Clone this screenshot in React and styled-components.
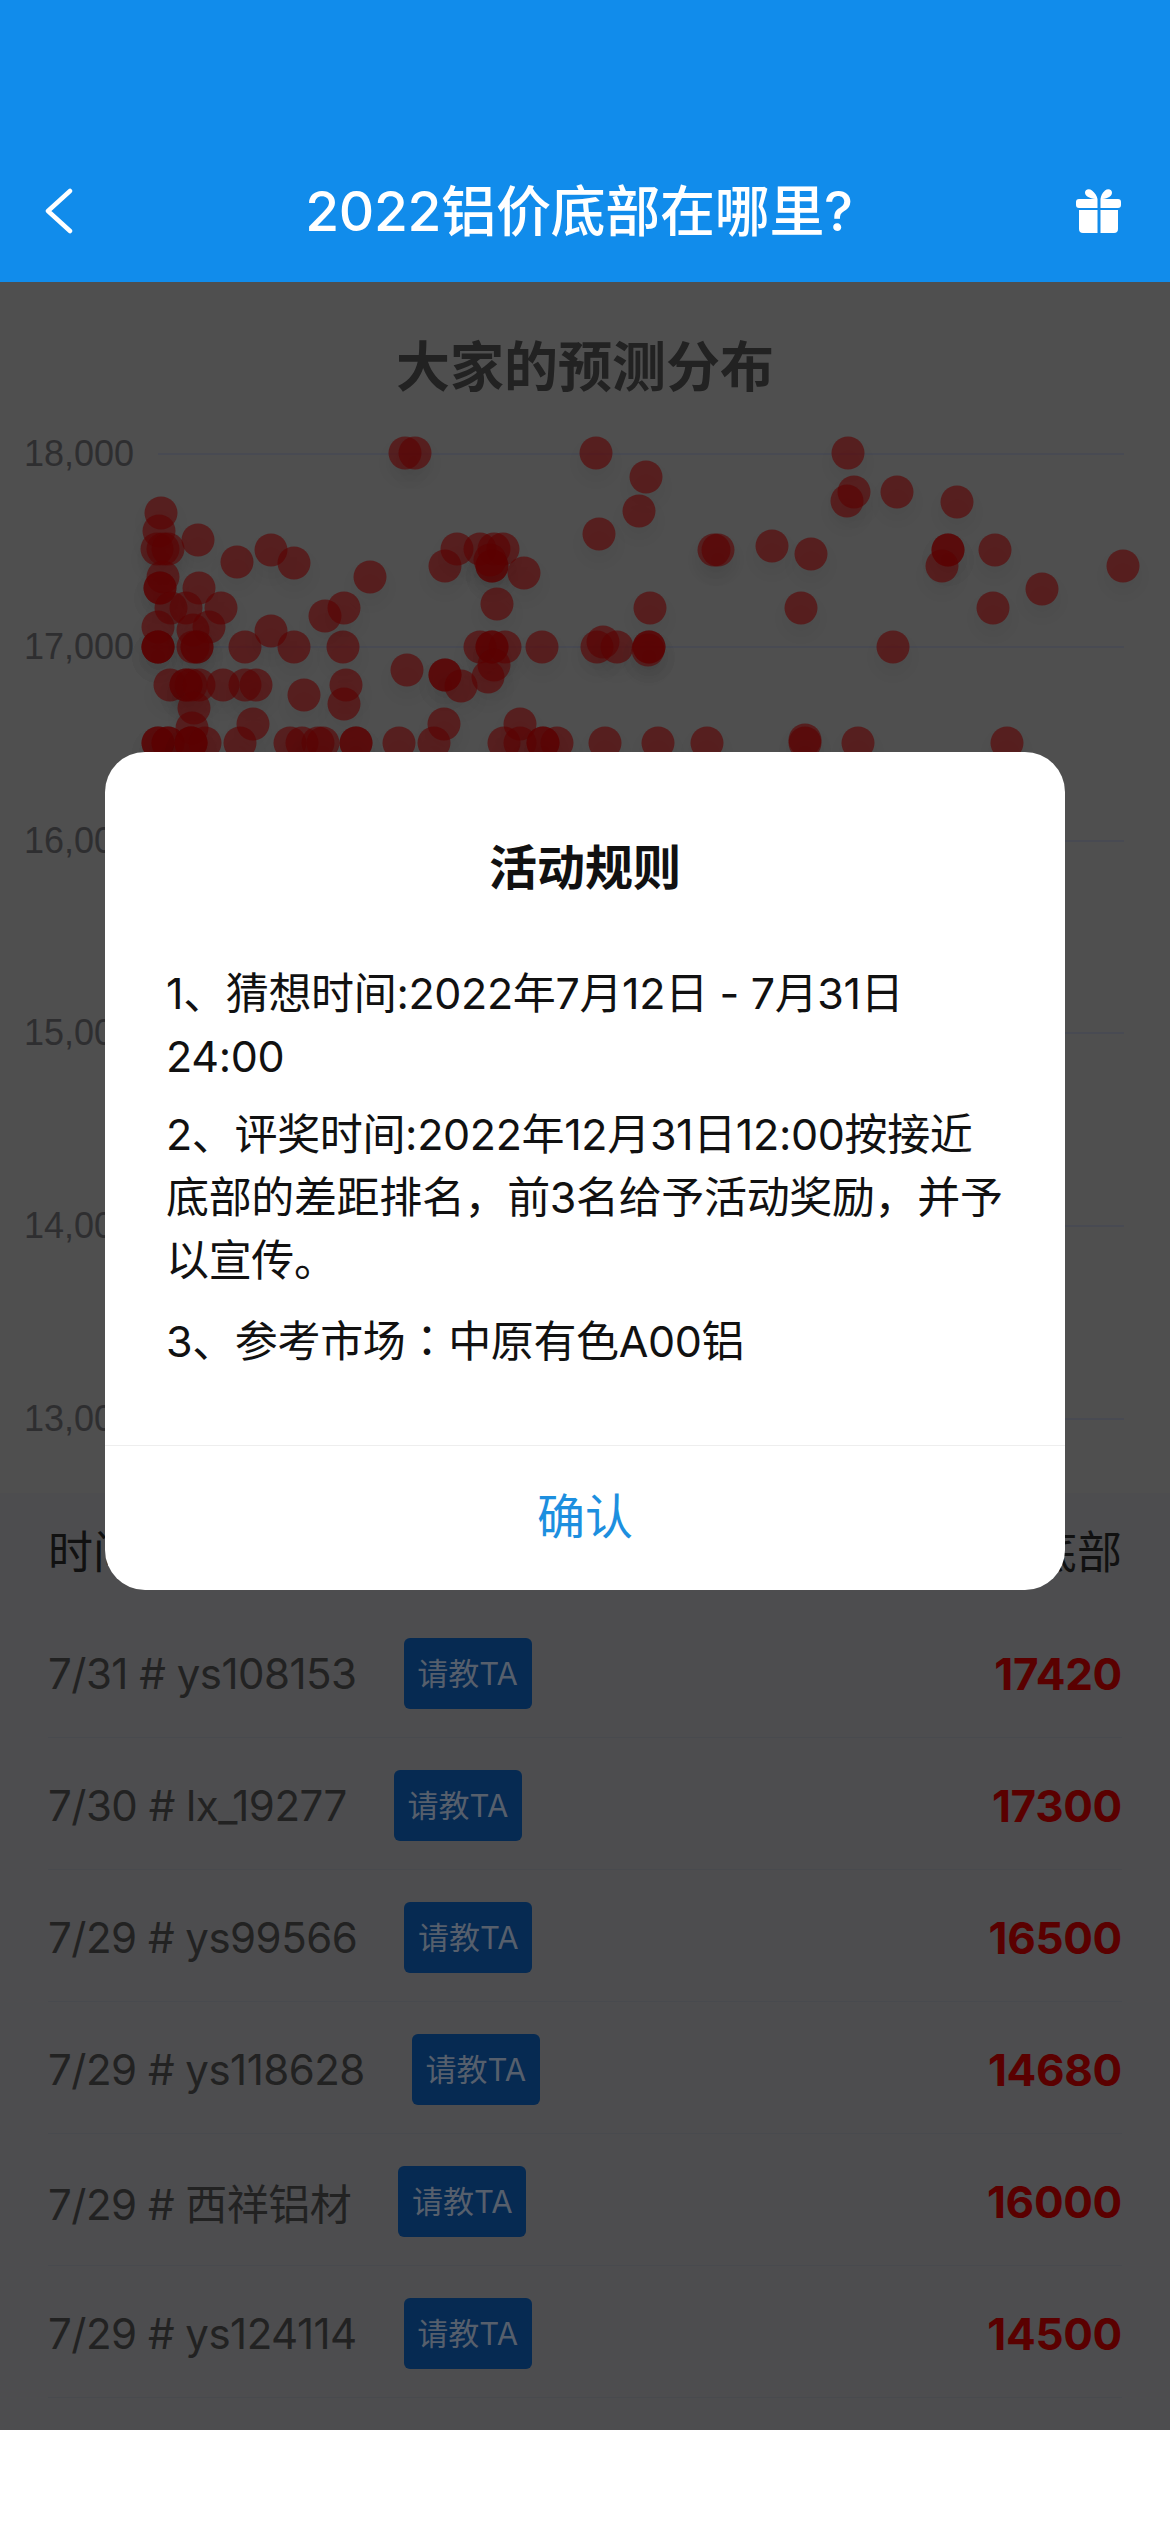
import styled, { createGlobalStyle } from "styled-components";

const GlobalStyle = createGlobalStyle`
  html, body {
    margin: 0;
    padding: 0;
    background: #fff;
  }
  * {
    box-sizing: border-box;
  }
`;

const FONT = `Inter, "Noto Sans CJK SC", sans-serif`;

// chart dots, x / y inside the chart svg
const DOTS = [
  [405,33],[415,33],[161,93],[159,111],[157,129],[163,129],[168,129],[163,157],[160,168],[160,168],
  [171,188],[158,207],[158,227],[158,227],[158,227],[198,120],[237,142],[271,130],[294,143],[370,157],
  [199,168],[221,188],[186,188],[209,207],[193,210],[197,227],[197,227],[193,227],[245,227],[271,211],
  [294,227],[343,227],[325,196],[344,188],[445,146],[457,129],[480,129],[494,129],[503,129],[492,146],
  [492,146],[490,140],[524,153],[497,184],[480,227],[492,227],[492,227],[505,227],[542,227],[494,245],
  [488,257],[407,250],[445,255],[445,255],[461,266],[170,265],[186,265],[186,265],[191,265],[199,265],
  [223,265],[245,265],[256,265],[304,275],[346,265],[344,284],[194,288],[192,308],[253,304],[444,304],
  [520,304],[158,323],[158,323],[168,323],[168,323],[191,323],[191,323],[191,323],[205,323],[240,323],
  [290,323],[302,323],[318,323],[323,323],[356,323],[356,323],[399,323],[434,323],[504,323],[520,323],
  [543,323],[543,323],[557,323],[596,33],[646,57],[639,91],[599,114],[714,130],[718,130],[772,126],
  [811,134],[848,33],[854,72],[847,81],[897,72],[957,82],[948,130],[948,130],[942,146],[995,130],
  [1042,169],[993,188],[1123,146],[650,188],[801,188],[603,222],[597,227],[617,227],[649,227],[649,227],
  [648,230],[893,227],[605,323],[658,323],[707,323],[805,320],[805,323],[858,323],[1007,323],
];

const AXIS = [
  { label: "18,000", y: 34 },
  { label: "17,000", y: 227 },
  { label: "16,000", y: 421 },
  { label: "15,000", y: 613 },
  { label: "14,000", y: 806 },
  { label: "13,000", y: 999 },
];

const ROWS = [
  { name: "7/31 # ys108153", value: 17420 },
  { name: "7/30 # lx_19277", value: 17300 },
  { name: "7/29 # ys99566", value: 16500 },
  { name: "7/29 # ys118628", value: 14680 },
  { name: "7/29 # 西祥铝材", value: 16000 },
  { name: "7/29 # ys124114", value: 14500 },
];

export default function App() {
  return (
    <Page>
      <GlobalStyle />
      <Header>
        <BackIcon viewBox="0 0 30 46">
          <path d="M26 3 L4 23 L26 43" />
        </BackIcon>
        <Title>2022铝价底部在哪里?</Title>
        <GiftIcon viewBox="0 0 50 50">
          <path d="M2 16a3 3 0 0 1 3-3h18.500v9H5a3 3 0 0 1-3-3zM47 16a3 3 0 0 0-3-3H26.500v9H44a3 3 0 0 0 3-3z" />
          <path d="M5 24h18.500v23H9a4 4 0 0 1-4-4zM44 24H26.500v23H40a4 4 0 0 0 4-4z" />
          <path d="M23.500 13C18 13 11.500 11 11 7 C10.600 3.500 15 2 18 4.500 C21 7 23 10 23.500 13zM26.500 13C32 13 37.500 11 38 7 C38.400 3.500 34 2 31 4.500 C28 7 27 10 26.500 13z" />
        </GiftIcon>
      </Header>

      <Dimmed>
        <ChartTitle>大家的预测分布</ChartTitle>
        <ChartSvg viewBox="0 0 1170 1073">
          <defs>
            <filter id="dotShadow" x="-100%" y="-100%" width="300%" height="300%">
              <feDropShadow dx="0" dy="10" stdDeviation="9" floodColor="#000" floodOpacity="0.1" />
            </filter>
          </defs>
          {AXIS.map((a) => (
            <g key={a.label}>
              <line x1="158" x2="1124" y1={a.y} y2={a.y} stroke="#484a52" strokeWidth="2" />
              <AxisLabel x="24" y={a.y + 12}>{a.label}</AxisLabel>
            </g>
          ))}
          {DOTS.map(([x, y], i) => (
            <circle key={i} cx={x} cy={y} r="16.5" fill="rgba(90,0,0,0.6)" filter="url(#dotShadow)" />
          ))}
        </ChartSvg>

        <TableHead>
          <span>时间</span>
          <span>底部</span>
        </TableHead>
        <Table>
          {ROWS.map((r) => (
            <Row key={r.name}>
              <Name>{r.name}</Name>
              <AskButton>请教TA</AskButton>
              <Value>{r.value}</Value>
            </Row>
          ))}
        </Table>
      </Dimmed>

      <Modal>
        <ModalTitle>活动规则</ModalTitle>
        <ModalBody>
          <p>1、猜想时间:2022年7月12日 - 7月31日 24:00</p>
          <p>2、评奖时间:2022年12月31日12:00按接近底部的差距排名，前3名给予活动奖励，并予以宣传。</p>
          <p>3、参考市场<Colon>：</Colon>中原有色A00铝</p>
        </ModalBody>
        <ConfirmButton>确认</ConfirmButton>
      </Modal>
    </Page>
  );
}

const Page = styled.div`
  position: relative;
  width: 1170px;
  height: 2532px;
  background: #fff;
  overflow: hidden;
  font-family: ${FONT};
`;

const Header = styled.div`
  display: flex;
  align-items: center;
  justify-content: space-between;
  height: 282px;
  padding: 140px 46px 0 44px;
  background: #118ceb;
  color: #fff;
`;

const BackIcon = styled.svg`
  width: 30px;
  height: 46px;
  margin-right: 10px;
  fill: none;
  stroke: #fff;
  stroke-width: 4.5;
  stroke-linecap: round;
  stroke-linejoin: round;
`;

const GiftIcon = styled.svg`
  width: 50px;
  height: 50px;
  fill: #fff;
`;

const Title = styled.div`
  font-size: 55px;
  line-height: 70px;
  font-weight: 500;
  letter-spacing: -0.3px;
  white-space: nowrap;
`;

const Dimmed = styled.div`
  height: 2148px;
  background: #4f4f4f;
`;

const ChartTitle = styled.div`
  height: 138px;
  padding-top: 52px;
  text-align: center;
  font-size: 54px;
  line-height: 68px;
  font-weight: 700;
  color: #222;
`;

const ChartSvg = styled.svg`
  display: block;
  width: 1170px;
  height: 1073px;
`;

const AxisLabel = styled.text`
  font-family: "Liberation Sans", sans-serif;
  font-size: 36px;
  fill: #2e2e30;
`;

const TableHead = styled.div`
  display: flex;
  align-items: center;
  justify-content: space-between;
  height: 113px;
  padding: 0 48px;
  font-size: 45px;
  color: #111;
  background: #4d4d4f;
`;

const Table = styled.div`
  padding: 0 48px 32px;
  background: #4d4d4f;
`;

const Row = styled.div`
  display: flex;
  align-items: center;
  height: 132px;
  padding-top: 4px;
  border-bottom: 1px solid #484a4e;
`;

const Name = styled.span`
  font-size: 42px;
  letter-spacing: -0.5px;
  color: #222;
  white-space: nowrap;
`;

const AskButton = styled.button`
  width: 128px;
  height: 71px;
  margin-left: 47px;
  padding: 0 0 4px;
  border: 0;
  border-radius: 6px;
  background: #062a52;
  color: #565f6c;
  font-family: ${FONT};
  font-size: 31px;
`;

const Value = styled.span`
  margin-left: auto;
  font-size: 44px;
  font-weight: 700;
  letter-spacing: -0.3px;
  color: #5a0000;
`;

const Modal = styled.div`
  position: absolute;
  top: 752px;
  left: 105px;
  width: 960px;
  height: 838px;
  display: flex;
  flex-direction: column;
  background: #fff;
  border-radius: 40px;
  overflow: hidden;
`;

const ModalTitle = styled.div`
  height: 210px;
  padding-top: 82px;
  text-align: center;
  font-size: 48px;
  line-height: 68px;
  font-weight: 700;
  color: #111;
`;

const ModalBody = styled.div`
  flex: 1;
  padding: 0 55px 0 61px;
  font-size: 43px;
  line-height: 63px;
  letter-spacing: -0.35px;
  color: #111;

  p {
    margin: 0 0 15px;
  }
`;

const Colon = styled.span`
  font-family: "Noto Sans CJK TC", sans-serif;
`;

const ConfirmButton = styled.div`
  height: 145px;
  padding-bottom: 10px;
  display: flex;
  align-items: center;
  justify-content: center;
  border-top: 1px solid #eee;
  font-size: 48px;
  color: #1d8fdf;
`;
